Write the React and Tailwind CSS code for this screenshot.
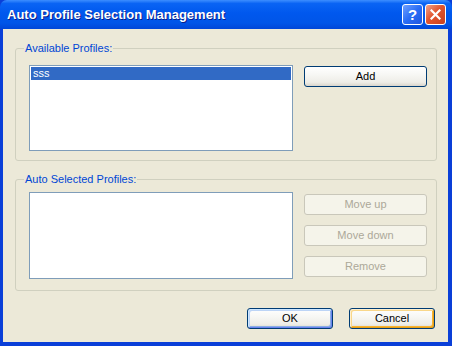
import React from 'react'

const font = { fontFamily: '"Liberation Sans", Arial, sans-serif' }

function XpButton({ children, variant = 'normal', className = '' }) {
  const base = 'flex items-center justify-center h-[21px] rounded-[3px] border text-[11px] leading-none'
  const styles = {
    normal:
      'border-[#003C74] text-black bg-[linear-gradient(180deg,#FFFFFF_0%,#F7F7F4_40%,#EEEDE7_80%,#D9D5CB_100%)]',
    ok:
      'border-[#003C74] text-black bg-[linear-gradient(180deg,#FFFFFF_0%,#F7F7F4_40%,#EEEDE7_80%,#D9D5CB_100%)] shadow-[inset_1px_1px_0_#CEE7FF,inset_-1px_-1px_0_#6982EE,inset_2px_2px_0_#BCD4F6,inset_-2px_-2px_0_#89ADE4]',
    focus:
      'border-[#003C74] text-black bg-[linear-gradient(180deg,#FFFFFF_0%,#F7F7F4_40%,#EEEDE7_80%,#D9D5CB_100%)] shadow-[inset_1px_1px_0_#FFF0CF,inset_-1px_-1px_0_#E5A01A,inset_2px_2px_0_#F9D78A,inset_-2px_-2px_0_#F8B330]',
    disabled: 'border-[#C9C7BA] text-[#ACA899] bg-[#F5F4EA]',
  }
  return <div className={`${base} ${styles[variant]} ${className}`}>{children}</div>
}

function GroupBox({ label, children, className = '' }) {
  return (
    <div className={`relative rounded-[3px] border border-[#D0D0BF] ${className}`}>
      <span className="absolute left-[8px] top-[-8px] bg-[#ECE9D8] px-[1px] text-[11px] leading-[14px] text-[#0046D5]">
        {label}
      </span>
      {children}
    </div>
  )
}

export default function App() {
  return (
    <div className="flex h-[346px] w-[452px] flex-col bg-[#0A3FD8]" style={font}>
      {/* title bar */}
      <div className="flex h-[29px] items-center rounded-t-[7px] bg-[linear-gradient(180deg,#3D8EFF_0%,#0A64F4_12%,#0058EE_45%,#0055E8_80%,#0046D8_100%)] pl-[7px] pr-[6px]">
        <span className="flex-1 text-[13px] font-bold text-white [text-shadow:1px_1px_0_#0A1E8A]">
          Auto Profile Selection Management
        </span>
        <div className="flex gap-[2px]">
          <div className="flex h-[21px] w-[21px] items-center justify-center rounded-[3px] border border-white bg-[linear-gradient(135deg,#6FA0FF_0%,#2A6DF5_50%,#1E56E0_100%)] text-[15px] font-bold leading-none text-white">
            ?
          </div>
          <div className="flex h-[21px] w-[21px] items-center justify-center rounded-[3px] border border-white bg-[linear-gradient(135deg,#F0A48C_0%,#E2552F_45%,#C8401F_100%)]">
            <svg width="11" height="11" viewBox="0 0 11 11">
              <path d="M1.5 1.5 L9.5 9.5 M9.5 1.5 L1.5 9.5" stroke="white" strokeWidth="2.2" strokeLinecap="square" />
            </svg>
          </div>
        </div>
      </div>

      {/* body */}
      <div className="flex flex-1 flex-col border-b-[4px] border-l-[3px] border-r-[4px] border-[#0A3FD8] bg-[#ECE9D8] pl-[12px] pr-[11px] pt-[19px]">
        <GroupBox label="Available Profiles:" className="flex h-[113px] gap-[11px] pl-[13px] pt-[16px]">
          <div className="h-[86px] w-[264px] border border-[#7F9DB9] bg-white p-[1px]">
            <div className="h-[13px] bg-[#316AC5] pl-[2px] text-[11px] leading-[13px] text-white">sss</div>
          </div>
          <XpButton className="mt-[1px] w-[123px]">Add</XpButton>
        </GroupBox>

        <GroupBox label="Auto Selected Profiles:" className="mt-[18px] flex h-[112px] gap-[11px] pl-[13px] pt-[12px]">
          <div className="h-[87px] w-[264px] border border-[#7F9DB9] bg-white" />
          <div className="mt-[2px] flex w-[123px] flex-col gap-[10px]">
            <XpButton variant="disabled">Move up</XpButton>
            <XpButton variant="disabled">Move down</XpButton>
            <XpButton variant="disabled">Remove</XpButton>
          </div>
        </GroupBox>

        <div className="mt-[17px] flex justify-end gap-[16px] pr-[2px]">
          <XpButton variant="ok" className="w-[86px]">OK</XpButton>
          <XpButton variant="focus" className="w-[86px]">Cancel</XpButton>
        </div>
      </div>
    </div>
  )
}
